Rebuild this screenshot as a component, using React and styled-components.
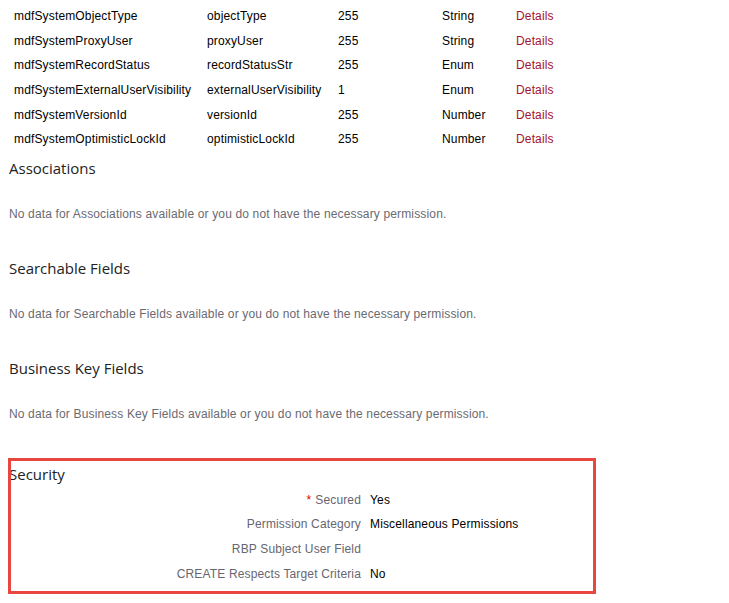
import styled, { createGlobalStyle } from "styled-components";

const GlobalStyle = createGlobalStyle`
  html, body {
    margin: 0;
    padding: 0;
    background: #fff;
  }
  body {
    font-family: "Liberation Sans", Arial, sans-serif;
    font-size: 12px;
    letter-spacing: 0.15px;
    color: #000;
  }
`;

const fields = [
  ["mdfSystemObjectType", "objectType", "255", "String"],
  ["mdfSystemProxyUser", "proxyUser", "255", "String"],
  ["mdfSystemRecordStatus", "recordStatusStr", "255", "Enum"],
  ["mdfSystemExternalUserVisibility", "externalUserVisibility", "1", "Enum"],
  ["mdfSystemVersionId", "versionId", "255", "Number"],
  ["mdfSystemOptimisticLockId", "optimisticLockId", "255", "Number"],
];

const emptySections = ["Associations", "Searchable Fields", "Business Key Fields"];

const security = [
  { label: "Secured", value: "Yes", required: true },
  { label: "Permission Category", value: "Miscellaneous Permissions" },
  { label: "RBP Subject User Field", value: "" },
  { label: "CREATE Respects Target Criteria", value: "No" },
];

const App = () => {
  return (
    <Page>
      <GlobalStyle />
      <FieldTable>
        {fields.map((f) => (
          <FieldRow key={f[0]}>
            <Cell>{f[0]}</Cell>
            <Cell>{f[1]}</Cell>
            <Cell>{f[2]}</Cell>
            <Cell>{f[3]}</Cell>
            <DetailsLink href="#">Details</DetailsLink>
          </FieldRow>
        ))}
      </FieldTable>

      {emptySections.map((name) => (
        <Section key={name}>
          <Heading>{name}</Heading>
          <EmptyMessage>
            No data for {name} available or you do not have the necessary permission.
          </EmptyMessage>
        </Section>
      ))}

      <SecuritySection>
        <Heading>Security</Heading>
        <FormGrid>
          {security.map((row) => (
            <FormRow key={row.label}>
              <Label>
                {row.required && <Required>*</Required>}
                {row.label}
              </Label>
              <Value>{row.value}</Value>
            </FormRow>
          ))}
        </FormGrid>
        <Highlight />
      </SecuritySection>
    </Page>
  );
};

const Page = styled.div`
  width: 729px;
  padding-top: 4px;
  padding-bottom: 20px;
`;

const FieldTable = styled.div`
  display: flex;
  flex-direction: column;
  padding-left: 14px;
`;

const FieldRow = styled.div`
  display: grid;
  grid-template-columns: 193px 131px 104px 74px auto;
  height: 24.6px;
  align-items: center;
`;

const Cell = styled.span`
  color: #000;
  white-space: nowrap;
`;

const DetailsLink = styled.a`
  color: #a3142e;
  text-decoration: none;
`;

const Section = styled.section`
  padding-left: 9px;
  margin-top: 6px;
  & + & {
    margin-top: 36px;
  }
`;

const Heading = styled.h3`
  position: relative;
  top: -1px;
  margin: 0;
  font-family: "Open Sans", "Liberation Sans", sans-serif;
  font-weight: 400;
  font-size: 15px;
  letter-spacing: 0;
  line-height: 22px;
  color: #222;
`;

const EmptyMessage = styled.p`
  margin: 26px 0 0;
  line-height: 16px;
  color: #6a6a72;
`;

const SecuritySection = styled.section`
  position: relative;
  margin-top: 42px;
  padding-left: 9px;
`;

const FormGrid = styled.div`
  margin-top: 2px;
  display: flex;
  flex-direction: column;
`;

const FormRow = styled.div`
  display: grid;
  grid-template-columns: 352px auto;
  column-gap: 9px;
  height: 24.6px;
  align-items: center;
`;

const Label = styled.span`
  text-align: right;
  color: #666670;
  white-space: nowrap;
`;

const Required = styled.span`
  color: #e00000;
  margin-right: 4px;
`;

const Value = styled.span`
  color: #000;
`;

const Highlight = styled.div`
  position: absolute;
  left: 8px;
  top: -6px;
  width: 588px;
  height: 136px;
  box-sizing: border-box;
  border: 3px solid #e8463f;
  pointer-events: none;
`;

export default App;
